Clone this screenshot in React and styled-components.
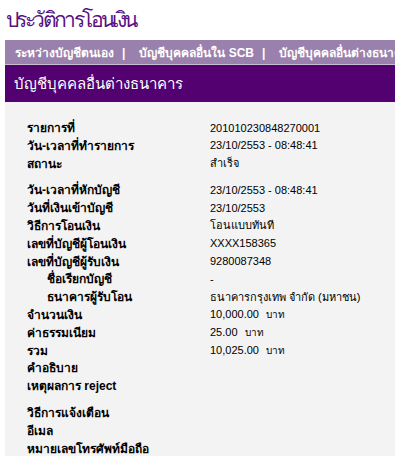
import React from "react";
import styled, { createGlobalStyle } from "styled-components";

const GlobalStyle = createGlobalStyle`
  body {
    margin: 0;
    background: #ffffff;
    font-family: "Liberation Sans", "Noto Sans", sans-serif;
  }
`;

const Page = styled.div`
  width: 395px;
  height: 462px;
  overflow: hidden;
  padding: 4px 0 0 5px;
  box-sizing: border-box;
`;

const Title = styled.h1`
  margin: 0 0 0 1px;
  font-size: 21px;
  font-weight: 400;
  line-height: 31px;
  color: #5a1281;
  letter-spacing: -2.6px;
`;

const Nav = styled.div`
  margin-top: 5px;
  height: 24px;
  background: #9a81ad;
  border-bottom: 1px solid #c8bcd0;
  display: flex;
  align-items: center;
  padding-left: 10px;
  white-space: nowrap;
  overflow: hidden;
  color: #ffffff;
  font-size: 12px;
  font-weight: 700;
`;

const NavItem = styled.span`
  flex-shrink: 0;
  & + &::before {
    content: "|";
    margin: 0 14px 0 8px;
  }
`;

const Header = styled.div`
  height: 37px;
  background: #530070;
  color: #ffffff;
  font-size: 15px;
  display: flex;
  align-items: center;
  padding-left: 9px;
`;

const Panel = styled.div`
  background: #f3f3f3;
  height: 354px;
  padding: 16px 0 0 22px;
  box-sizing: border-box;
`;

const Group = styled.div`
  display: flex;
  flex-direction: column;
  margin-bottom: 9px;
`;

const Row = styled.div`
  display: grid;
  grid-template-columns: 183px 1fr;
  height: 17.8px;
  align-items: center;
  font-size: 11px;
  color: #000000;
`;

const Label = styled.div`
  font-weight: 700;
  font-size: 12px;
  padding-left: ${(p) => (p.sub ? "20px" : "0")};
`;

const Value = styled.div`
  white-space: nowrap;
`;

const Unit = styled.span`
  margin-left: 7px;
  font-size: 10px;
`;

const groups = [
  [
    ["รายการที่", "201010230848270001"],
    ["วัน-เวลาที่ทำรายการ", "23/10/2553 - 08:48:41"],
    ["สถานะ", "สำเร็จ"],
  ],
  [
    ["วัน-เวลาที่หักบัญชี", "23/10/2553 - 08:48:41"],
    ["วันที่เงินเข้าบัญชี", "23/10/2553"],
    ["วิธีการโอนเงิน", "โอนแบบทันที"],
    ["เลขที่บัญชีผู้โอนเงิน", "XXXX158365"],
    ["เลขที่บัญชีผู้รับเงิน", "9280087348"],
    ["ชื่อเรียกบัญชี", "-", true],
    ["ธนาคารผู้รับโอน", "ธนาคารกรุงเทพ จำกัด (มหาชน)", true],
    ["จำนวนเงิน", "10,000.00", false, "บาท"],
    ["ค่าธรรมเนียม", "25.00", false, "บาท"],
    ["รวม", "10,025.00", false, "บาท"],
    ["คำอธิบาย", ""],
    ["เหตุผลการ reject", ""],
  ],
  [
    ["วิธีการแจ้งเตือน", ""],
    ["อีเมล", ""],
    ["หมายเลขโทรศัพท์มือถือ", ""],
  ],
];

export default function App() {
  return (
    <>
      <GlobalStyle />
      <Page>
        <Title>ประวัติการโอนเงิน</Title>
        <Nav>
          <NavItem>ระหว่างบัญชีตนเอง</NavItem>
          <NavItem>บัญชีบุคคลอื่นใน SCB</NavItem>
          <NavItem>บัญชีบุคคลอื่นต่างธนาคาร</NavItem>
        </Nav>
        <Header>บัญชีบุคคลอื่นต่างธนาคาร</Header>
        <Panel>
          {groups.map((rows, gi) => (
            <Group key={gi}>
              {rows.map(([label, value, sub, unit]) => (
                <Row key={label}>
                  <Label sub={sub}>{label}</Label>
                  <Value>
                    {value}
                    {unit && <Unit>{unit}</Unit>}
                  </Value>
                </Row>
              ))}
            </Group>
          ))}
        </Panel>
      </Page>
    </>
  );
}
